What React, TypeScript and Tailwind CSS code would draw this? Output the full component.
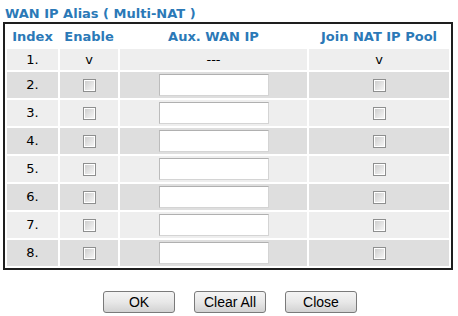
import React from 'react';

const rows = [2, 3, 4, 5, 6, 7, 8];

const FakeCheckbox: React.FC = () => (
  <span className="inline-block w-[13px] h-[13px] border border-[#8e8f8f] bg-white p-[1px] align-middle">
    <span className="block w-full h-full bg-gradient-to-br from-[#cfcfcf] to-[#f4f4f4]" />
  </span>
);

const Button: React.FC<{ label: string }> = ({ label }) => (
  <button
    type="button"
    className="w-[72px] h-[22px] rounded-[3px] border border-[#7a7a7a] bg-gradient-to-b from-[#f4f4f4] via-[#e8e8e8] to-[#d2d2d2] text-[14px] leading-none text-black"
    style={{ fontFamily: '"Liberation Sans", Arial, sans-serif' }}
  >
    {label}
  </button>
);

export default function App() {
  return (
    <div
      className="w-[458px] h-[316px] bg-white pt-[6px] text-[13px] text-black"
      style={{ fontFamily: '"DejaVu Sans", Verdana, sans-serif' }}
    >
      <h1 className="pl-[5px] h-[16px] leading-[16px] text-[13px] font-bold text-[#2b79b7]">
        WAN IP Alias ( Multi-NAT )
      </h1>
      <table className="ml-[3px] w-[450px] border-2 border-[#1e1e1e] border-separate border-spacing-[2px]">
        <thead>
          <tr className="h-[21px] text-[#2b79b7] font-bold">
            <th className="w-[51px] p-0 text-center">Index</th>
            <th className="w-[58px] p-0 text-center">Enable</th>
            <th className="w-[187px] p-0 text-center">Aux. WAN IP</th>
            <th className="p-0 text-center">Join NAT IP Pool</th>
          </tr>
        </thead>
        <tbody>
          <tr className="h-[21px] bg-[#eeeeee]">
            <td className="p-0 text-center">1.</td>
            <td className="p-0 text-center">v</td>
            <td className="p-0 text-center">---</td>
            <td className="p-0 text-center">v</td>
          </tr>
          {rows.map(n => (
            <tr key={n} className={`h-[26px] ${n % 2 === 0 ? 'bg-[#dedede]' : 'bg-[#eeeeee]'}`}>
              <td className="p-0 text-center">{n}.</td>
              <td className="p-0 text-center">
                <FakeCheckbox />
              </td>
              <td className="p-0 text-center">
                <input
                  type="text"
                  className="w-[110px] h-[22px] align-middle bg-white border border-[#d4d4d4] border-t-[#b0b0b0] border-l-[#bcbcbc] outline-none"
                />
              </td>
              <td className="p-0 text-center">
                <FakeCheckbox />
              </td>
            </tr>
          ))}
        </tbody>
      </table>
      <div className="flex justify-center gap-[19px] mt-[21px] pl-[2px]">
        <Button label="OK" />
        <Button label="Clear All" />
        <Button label="Close" />
      </div>
    </div>
  );
}
